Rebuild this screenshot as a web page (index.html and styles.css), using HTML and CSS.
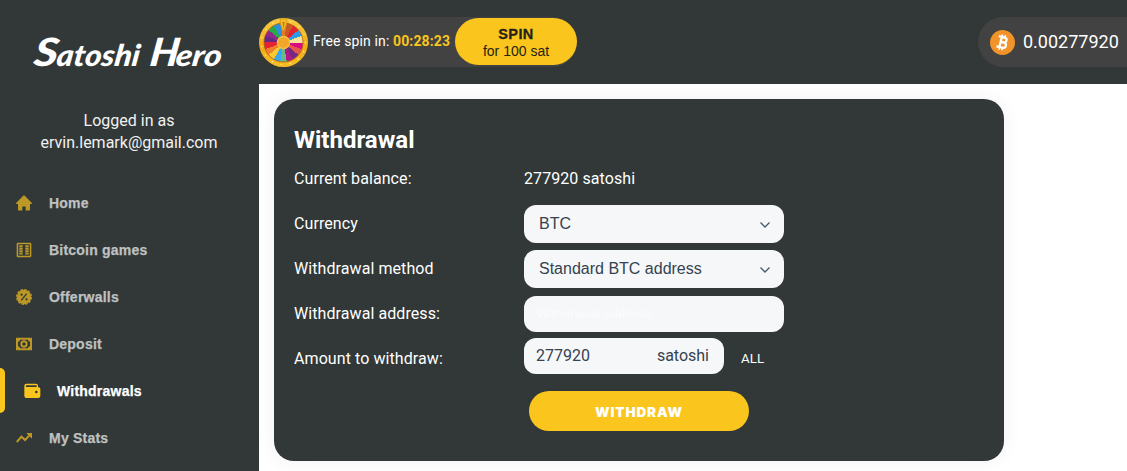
FILE: index.html
```html
<!DOCTYPE html>
<html lang="en">
<head>
<meta charset="utf-8">
<title>Satoshi Hero</title>
<link rel="stylesheet" href="styles.css">
</head>
<body>
<div class="app">
  <aside class="sidebar">
    <svg class="logo" width="192" height="48" viewBox="0 0 192 48"><text y="37" transform="translate(5 0) skewX(-8)"><tspan class="cap" x="0" textLength="24" lengthAdjust="spacingAndGlyphs">S</tspan><tspan x="23" textLength="83" lengthAdjust="spacingAndGlyphs">atoshi</tspan> <tspan class="cap" x="116" textLength="29" lengthAdjust="spacingAndGlyphs">H</tspan><tspan x="142" textLength="46" lengthAdjust="spacingAndGlyphs">ero</tspan></text></svg>
    <div class="user">Logged in as<br>ervin.lemark@gmail.com</div>
    <nav class="nav">
      <a class="item"><svg viewBox="0 0 24 24"><path d="M12 .5a1.500 1.500 0 0 1 1.100.5l10.400 10.500c.8.8.4 2-.6 2H21v8.500c0 .8-.5 1.300-1.300 1.300H14.500v-6h-5v6H4.300C3.500 23.300 3 22.800 3 22v-8.500H1.100c-1 0-1.400-1.200-.6-2L10.900 1A1.500 1.500 0 0 1 12 .5z"/></svg><span>Home</span></a>
      <a class="item"><svg viewBox="0 0 24 24"><path fill-rule="evenodd" d="M3 1h18a2 2 0 0 1 2 2v18a2 2 0 0 1-2 2H3a2 2 0 0 1-2-2V3a2 2 0 0 1 2-2zm.3 2.300v17.400h17.400V3.300z"/><path d="M5 5h5v2.800H5zm0 3.700h5v2.800H5zm0 3.700h5v2.800H5zm0 3.700h5v2.800H5zM14 5h5v2.800h-5zm0 3.700h5v2.800h-5zm0 3.700h5v2.800h-5zm0 3.700h5v2.800h-5z"/></svg><span>Bitcoin games</span></a>
      <a class="item"><svg viewBox="0 0 24 24"><circle cx="12" cy="12" r="10.800"/><circle cx="12" cy="12" r="11" fill="none" stroke="currentColor" stroke-width="2" stroke-dasharray="3.760 2"/><path class="cut" d="M16 7 8 17"/><circle class="hole" cx="8.300" cy="8.500" r="1.700"/><circle class="hole" cx="15.700" cy="15.500" r="1.700"/></svg><span>Offerwalls</span></a>
      <a class="item"><svg viewBox="0 0 24 24"><path fill-rule="evenodd" d="M0 2.500h24v19H0zm6 3a3 3 0 0 1-3 3v7a3 3 0 0 1 3 3h12a3 3 0 0 1 3-3v-7a3 3 0 0 1-3-3z"/><circle cx="12" cy="12" r="4" fill="none" stroke="currentColor" stroke-width="3"/></svg><span>Deposit</span></a>
      <a class="item active"><svg viewBox="0 0 24 24"><path fill-rule="evenodd" d="M3.500 1H18a3 3 0 0 1 3 3v2.500h1a2.500 2.500 0 0 1 2.500 2.500v10.500a3 3 0 0 1-3 3H3.500a3 3 0 0 1-3-3V4a3 3 0 0 1 3-3zm.5 2.500a1 1 0 0 0 0 2.500h15V3.500zM18.500 11.500a2 2 0 1 0 0 4 2 2 0 0 0 0-4z"/></svg><span>Withdrawals</span></a>
      <a class="item"><svg viewBox="0 0 24 24"><path d="m1.200 18 7-8 5.500 5L21 7" fill="none" stroke="currentColor" stroke-width="3"/><path d="M15.500 4.500H24V13z"/></svg><span>My Stats</span></a>
    </nav>
  </aside>
  <div class="main">
    <header class="top">
      <div class="spin">
        <div class="wheel">
          <div class="slices"></div>
          <svg class="rim" viewBox="0 0 49 49"><circle cx="24.500" cy="24.500" r="19.500" fill="none" stroke="#a85a16" stroke-width=".8"/><circle cx="24.500" cy="24.500" r="22" fill="none" stroke="#fff6bd" stroke-width="1.400" stroke-linecap="round" stroke-dasharray="0 9.215"/><circle cx="24.500" cy="24.500" r="6" fill="#f3a42b" stroke="#f8c33c" stroke-width="1.500"/><path d="M21.200 1.500c1-1.200 5.600-1.200 6.600 0 .7 3-1.300 8.500-3.300 12-2-3.500-4-9-3.300-12z" fill="#f5b91e" stroke="#c98a14" stroke-width=".6"/><path d="m23.500 4 1 7 1.200-7z" fill="#b97b16"/></svg>
        </div>
        <div class="timer">Free spin in: <b>00:28:23</b></div>
        <button class="spin-btn"><b>SPIN</b><span>for 100 sat</span></button>
      </div>
      <div class="balance">
        <svg class="coin" viewBox="0 0 25 25"><circle cx="12.500" cy="12.500" r="12.500" fill="#f19328"/><g transform="rotate(13 12.500 12.500)" fill="none" stroke="#fff"><path stroke-width="2.300" d="M10.500 7v11M7.500 7.200h6c3.300 0 3.300 4.900 0 4.900h-3M13.500 12.100c4 0 4 5.500 0 5.500h-6"/><path stroke-width="1.600" d="M10.700 4.700V7m3-2.300V7m-3 10.500v2.700m3-2.700v2.700"/></g></svg>
        <span>0.00277920</span>
      </div>
    </header>
    <section class="card">
      <h1>Withdrawal</h1>
      <div class="row"><label>Current balance:</label><span>277920 satoshi</span></div>
      <div class="row"><label>Currency</label><div class="field select"><span>BTC</span><svg viewBox="0 0 12 8"><path d="m1.500 1.500 4.500 4.500 4.500-4.500"/></svg></div></div>
      <div class="row"><label>Withdrawal method</label><div class="field select"><span>Standard BTC address</span><svg viewBox="0 0 12 8"><path d="m1.500 1.500 4.500 4.500 4.500-4.500"/></svg></div></div>
      <div class="row"><label>Withdrawal address:</label><div class="field address">Withdrawal address:</div></div>
      <div class="row"><label>Amount to withdraw:</label><div class="field amount"><span>277920</span><span>satoshi</span></div><span class="all">ALL</span></div>
      <button class="withdraw">WITHDRAW</button>
    </section>
  </div>
</div>
</body>
</html>
```
FILE: styles.css
```css
* { box-sizing: border-box; }
body { margin: 0; font: 16px/22px Roboto, sans-serif; color: #fff; background: #fff; }
.app { display: flex; width: 1127px; height: 471px; overflow: hidden; }
.sidebar { flex: 0 0 259px; background: #313837; }
.logo { display: block; margin: 29px 0 0 33px; overflow: visible; }
.logo text { font: italic 900 30px Lato, sans-serif; fill: #fff; }
.logo .cap { font-size: 39px; }
.user { margin-top: 33px; text-align: center; color: #f1f1f1; padding-right: 1px; }
.nav { margin-top: 25px; }
.item { display: flex; align-items: center; height: 47px; padding-left: 16px; color: #bd9827; position: relative; }
.item svg { width: 16px; height: 16px; fill: currentColor; margin-right: 17px; overflow: visible; }
.item span { font: bold 14px "Liberation Sans", Arial, sans-serif; letter-spacing: .22px; color: #bfc1c1; -webkit-text-stroke: .25px currentColor; }
.item .cut { stroke: #313837; stroke-width: 2; }
.item .hole { fill: #313837; }
.item.active { padding-left: 24px; color: #fac51c; }
.item.active span { color: #fff; }
.item.active::before { content: ""; position: absolute; left: 0; top: 1px; width: 5px; height: 45px; border-radius: 0 7px 7px 0; background: #fac51c; }
.main { flex: 1; min-width: 0; }
.top { height: 84px; padding-top: 17px; background: #313837; display: flex; justify-content: space-between; }
.spin { width: 318px; height: 50px; border-radius: 25px; background: #424242; display: flex; align-items: center; }
.wheel { position: relative; width: 49px; height: 49px; border-radius: 50%; background: linear-gradient(#f8c940, #f2ad18 60%, #f7bd25); padding: 5px; }
.slices { width: 39px; height: 39px; border-radius: 50%; background: conic-gradient(from -10deg, #e97824 0 20deg, #c85a25 0 40deg, #e52330 0 60deg, #2c9be5 0 80deg, #f9e29a 0 100deg, #db0a83 0 120deg, #e8554b 0 140deg, #732982 0 160deg, #b01887 0 180deg, #68ba87 0 200deg, #35a8ee 0 220deg, #fac830 0 240deg, #ef812e 0 260deg, #e52531 0 280deg, #652887 0 300deg, #92268a 0 320deg, #2ba849 0 340deg, #2c91dc 0); }
.rim { position: absolute; inset: 0; width: 49px; height: 49px; }
.timer { width: 147px; padding: 0 0 2px 5px; font-size: 14px; letter-spacing: .13px; white-space: nowrap; }
.timer b { color: #fac51c; }
.spin-btn { width: 122px; height: 47px; margin-top: -1px; padding: 2px 0 0; border: 0; border-radius: 24px; background: #fac51c; color: #262219; font: 14px/17px "Liberation Sans", Arial, sans-serif; display: flex; flex-direction: column; align-items: center; justify-content: center; }
.spin-btn b { letter-spacing: .4px; font-size: 14.5px; -webkit-text-stroke: .3px currentColor; }
.balance { width: 149px; height: 50px; border-radius: 25px 0 0 25px; background: #424242; padding-left: 12px; display: flex; align-items: center; gap: 8px; font-size: 18px; }
.coin { width: 25px; height: 25px; }
.card { width: 730px; height: 362px; margin: 15px 0 0 15px; padding: 25px 20px 0; border-radius: 20px; background: #313837; box-shadow: 0 0 20px rgba(0, 0, 0, .06); }
h1 { margin: 0 0 -1px; font: bold 24px/33px Roboto, sans-serif; }
.row { display: flex; align-items: center; height: 45px; letter-spacing: .08px; }
.row label { width: 230px; }
.field { display: flex; align-items: center; width: 260px; height: 36px; border-radius: 12px; background: #f6f7f9; color: #35424f; letter-spacing: 0; }
.select { height: 38px; margin-top: 1px; padding: 0 13px 0 15px; justify-content: space-between; font: 16px "Liberation Sans", Arial, sans-serif; }
.select svg { width: 12px; height: 8px; margin-top: 2px; fill: none; stroke: #4c5966; stroke-width: 1.3; }
.address { margin-top: 1px; padding-left: 13px; color: #fafbfc; font: bold 12px "Liberation Sans", Arial, sans-serif; }
.amount { width: 200px; margin-top: -5px; padding: 0 15px 0 12px; justify-content: space-between; }
.all { margin-left: 17px; font-size: 13.3px; }
.withdraw { display: block; width: 220px; height: 40px; margin: 10px 0 0 235px; padding: 2px 0 0; border: 0; border-radius: 20px; background: #fac51c; color: #fff; font: 900 13.5px Inter, sans-serif; letter-spacing: .9px; }
```
